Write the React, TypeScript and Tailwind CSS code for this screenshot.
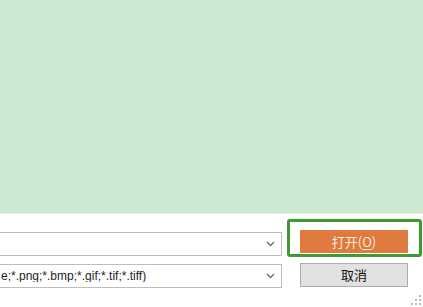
import React from "react";

/*
 * File-open dialog, bottom strip: type dropdowns + open/cancel buttons,
 * with the "open" button highlighted by a green annotation frame.
 */

function Chevron() {
	return (
		<svg width="9" height="6" viewBox="0 0 9 6" className="shrink-0" aria-hidden="true">
			<path d="M1 1l3.5 3.5L8 1" fill="none" stroke="#6d6d6d" strokeWidth="1.4" />
		</svg>
	);
}

function Combo({ text }: { text?: string }) {
	return (
		<div className="-ml-[3px] w-[285px] h-[24px] border border-[#bdbdbd] bg-white flex items-center pl-[3px] pr-[6px]">
			<span className="flex-1 truncate text-[12px] text-[#1e1e1e] leading-none">{text}</span>
			<Chevron />
		</div>
	);
}

export default function App() {
	return (
		<div className="w-[423px] h-[307px] overflow-hidden bg-white relative font-['Liberation_Sans','Noto_Sans_CJK_SC',sans-serif]">
			{/* preview canvas */}
			<div className="h-[213px] bg-[#cde8d1]" />
			<div className="h-px bg-[#e4f2e6]" />

			{/* controls */}
			<div className="flex pt-[16px]">
				<div className="w-[282px] flex flex-col">
					<div className="mt-[2px]">
						<Combo />
					</div>
					<div className="mt-[8px]">
						<Combo text="e;*.png;*.bmp;*.gif;*.tif;*.tiff)" />
					</div>
				</div>
				<div className="ml-[18px] w-[108px] flex flex-col">
					<button
						type="button"
						className="h-[23px] bg-[#e07b3f] text-[#fbe9dc] text-[13px] flex items-center justify-center font-['Noto_Sans_CJK_SC',sans-serif]"
					>
						打开(<span className="underline underline-offset-2">O</span>)
					</button>
					<button
						type="button"
						className="mt-[10px] h-[24px] bg-[#e1e1e1] border border-[#adadad] text-[#111] text-[13px] flex items-center justify-center font-['Noto_Sans_CJK_SC',sans-serif]"
					>
						取消
					</button>
				</div>
			</div>

			{/* annotation frame around the open button */}
			<div className="absolute left-[287px] top-[219px] w-[135px] h-[38px] border-[3px] border-[#3d9b2f] rounded-[3px] pointer-events-none" />

			{/* resize grip */}
			<svg width="12" height="12" viewBox="0 0 12 12" className="absolute right-[1px] bottom-[1px]" aria-hidden="true">
				{[
					[9, 1],
					[9, 5],
					[5, 5],
					[9, 9],
					[5, 9],
					[1, 9],
				].map(([x, y]) => (
					<rect key={`${x}-${y}`} x={x} y={y} width="2" height="2" fill="#b8b8b8" />
				))}
			</svg>
		</div>
	);
}
